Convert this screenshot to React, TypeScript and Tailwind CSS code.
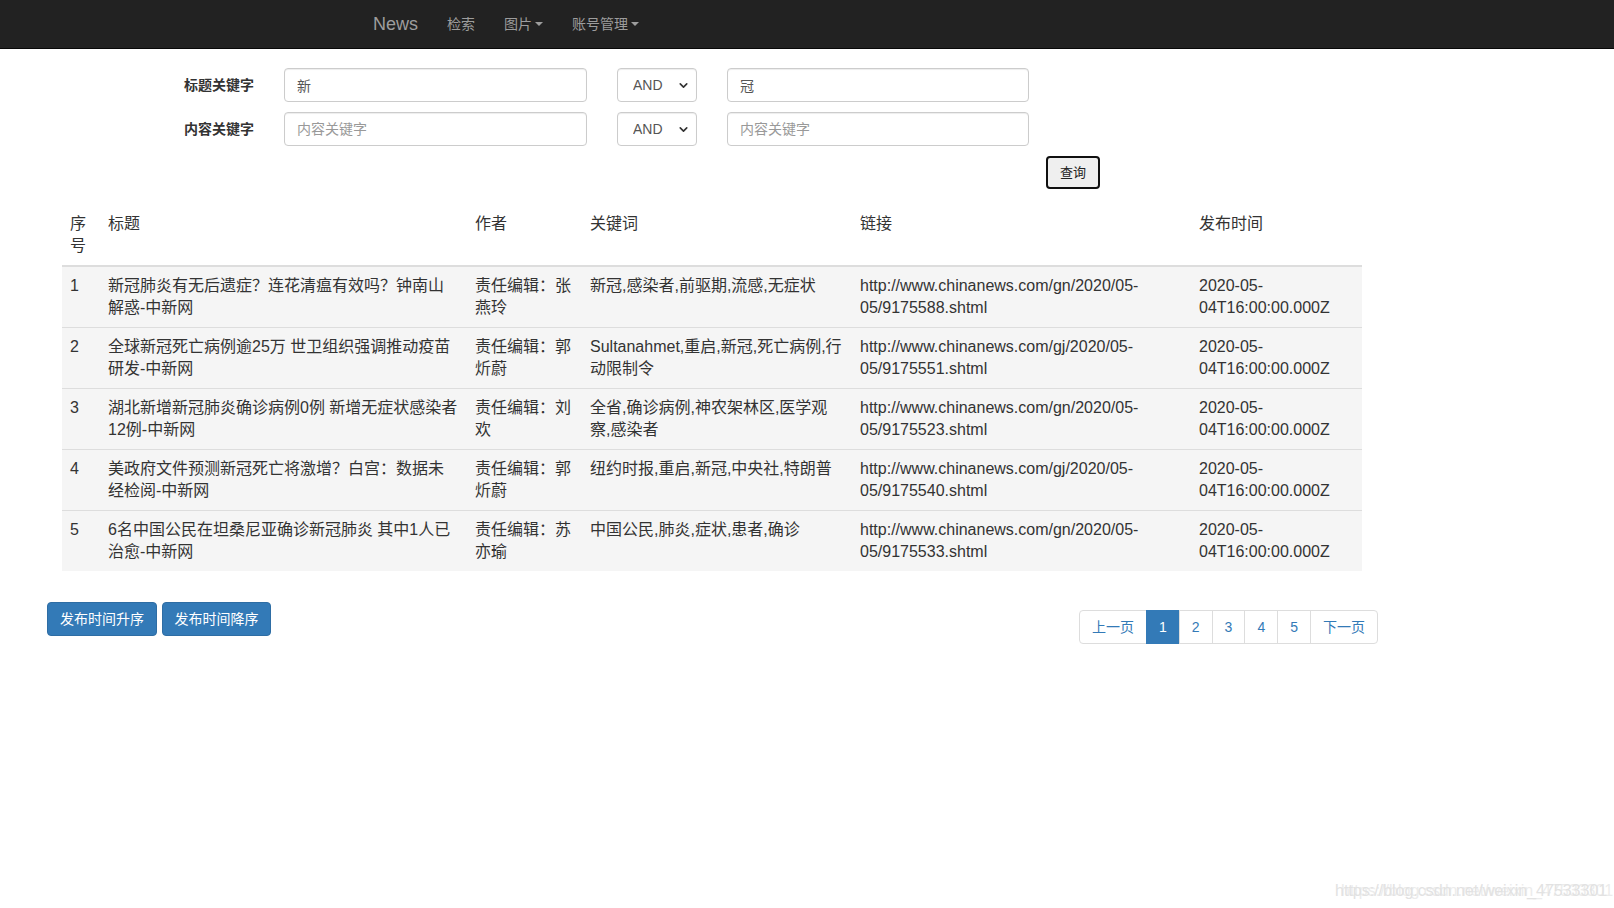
import { ChevronDown } from 'lucide-react';

const rows = [
  {
    id: 1,
    title: '新冠肺炎有无后遗症？连花清瘟有效吗？钟南山解惑-中新网',
    author: '责任编辑：张燕玲',
    keywords: '新冠,感染者,前驱期,流感,无症状',
    link: 'http://www.chinanews.com/gn/2020/05-05/9175588.shtml',
  },
  {
    id: 2,
    title: '全球新冠死亡病例逾25万 世卫组织强调推动疫苗研发-中新网',
    author: '责任编辑：郭炘蔚',
    keywords: 'Sultanahmet,重启,新冠,死亡病例,行动限制令',
    link: 'http://www.chinanews.com/gj/2020/05-05/9175551.shtml',
  },
  {
    id: 3,
    title: '湖北新增新冠肺炎确诊病例0例 新增无症状感染者12例-中新网',
    author: '责任编辑：刘欢',
    keywords: '全省,确诊病例,神农架林区,医学观察,感染者',
    link: 'http://www.chinanews.com/gn/2020/05-05/9175523.shtml',
  },
  {
    id: 4,
    title: '美政府文件预测新冠死亡将激增？白宫：数据未经检阅-中新网',
    author: '责任编辑：郭炘蔚',
    keywords: '纽约时报,重启,新冠,中央社,特朗普',
    link: 'http://www.chinanews.com/gj/2020/05-05/9175540.shtml',
  },
  {
    id: 5,
    title: '6名中国公民在坦桑尼亚确诊新冠肺炎 其中1人已治愈-中新网',
    author: '责任编辑：苏亦瑜',
    keywords: '中国公民,肺炎,症状,患者,确诊',
    link: 'http://www.chinanews.com/gn/2020/05-05/9175533.shtml',
  },
];

const font = "font-['Liberation_Sans','Noto_Sans_CJK_SC',sans-serif]";

function Caret() {
  return <span className="ml-[3px] inline-block h-0 w-0 border-x-[4px] border-t-[4px] border-x-transparent border-t-[#9d9d9d] align-middle" />;
}

function AndSelect() {
  return (
    <div className="relative ml-[30px] w-[80px]">
      <select className="h-[34px] w-full appearance-none rounded-[4px] border border-[#ccc] bg-white pl-[15px] text-[14px] text-[#555] shadow-[inset_0_1px_1px_rgba(0,0,0,0.075)]">
        <option>AND</option>
        <option>OR</option>
      </select>
      <ChevronDown className="pointer-events-none absolute right-[7px] top-[11px] h-[13px] w-[13px] text-[#333]" strokeWidth={3} />
    </div>
  );
}

function TextInput({ value, placeholder }: { value?: string; placeholder: string }) {
  return (
    <input
      defaultValue={value}
      placeholder={placeholder}
      className="h-[34px] w-full rounded-[4px] border border-[#ccc] bg-white px-[12px] text-[14px] text-[#555] shadow-[inset_0_1px_1px_rgba(0,0,0,0.075)] placeholder:text-[#999]"
    />
  );
}

export default function App() {
  return (
    <div className={`relative min-h-[908px] bg-white text-[#333] ${font}`}>
      {/* Navbar */}
      <nav className="flex h-[49px] items-center border-b border-[#080808] bg-[#222] pl-[373px] text-[#9d9d9d]">
        <span className="text-[18px]">News</span>
        <span className="ml-[29px] text-[14px]">检索</span>
        <span className="ml-[29px] flex items-center text-[14px]">图片<Caret /></span>
        <span className="ml-[29px] flex items-center text-[14px]">账号管理<Caret /></span>
      </nav>

      {/* Search form */}
      <div className="pl-[184px] pt-[19px]">
        <div className="flex items-center">
          <label className="w-[100px] text-[14px] font-bold">标题关键字</label>
          <div className="w-[303px]"><TextInput value="新" placeholder="标题关键字" /></div>
          <AndSelect />
          <div className="ml-[30px] w-[302px]"><TextInput value="冠" placeholder="标题关键字" /></div>
        </div>
        <div className="mt-[10px] flex items-center">
          <label className="w-[100px] text-[14px] font-bold">内容关键字</label>
          <div className="w-[303px]"><TextInput placeholder="内容关键字" /></div>
          <AndSelect />
          <div className="ml-[30px] w-[302px]"><TextInput placeholder="内容关键字" /></div>
        </div>
      </div>
      <div className="pl-[1046px] pt-[10px]">
        <button className="h-[33px] w-[54px] rounded-[4px] border-2 border-[#101010] bg-[#efefef] text-[13px] text-[#222]">查询</button>
      </div>

      {/* Results table */}
      <table className="ml-[62px] mt-[16px] w-[1300px] table-fixed border-collapse text-[16px] leading-[22px]">
        <colgroup>
          <col className="w-[38px]" />
          <col className="w-[367px]" />
          <col className="w-[115px]" />
          <col className="w-[270px]" />
          <col className="w-[339px]" />
          <col className="w-[171px]" />
        </colgroup>
        <thead>
          <tr className="border-b-2 border-[#ddd] text-left align-top">
            <th className="p-[8px] font-normal">序号</th>
            <th className="p-[8px] font-normal">标题</th>
            <th className="p-[8px] font-normal">作者</th>
            <th className="p-[8px] font-normal">关键词</th>
            <th className="p-[8px] font-normal">链接</th>
            <th className="p-[8px] font-normal">发布时间</th>
          </tr>
        </thead>
        <tbody>
          {rows.map((r) => (
            <tr key={r.id} className="border-t border-[#ddd] bg-[#f5f5f5] align-top">
              <td className="p-[8px]">{r.id}</td>
              <td className="p-[8px]">{r.title}</td>
              <td className="p-[8px]">{r.author}</td>
              <td className="p-[8px]">{r.keywords}</td>
              <td className="p-[8px]">{r.link}</td>
              <td className="p-[8px]">2020-05-04T16:00:00.000Z</td>
            </tr>
          ))}
        </tbody>
      </table>

      {/* Sort buttons + pagination */}
      <div className="mt-[31px] flex items-start">
        <div className="ml-[47px] flex gap-[5px]">
          <button className="h-[34px] w-[110px] rounded-[4px] border border-[#2e6da4] bg-[#337ab7] text-[14px] text-white">发布时间升序</button>
          <button className="h-[34px] w-[109px] rounded-[4px] border border-[#2e6da4] bg-[#337ab7] text-[14px] text-white">发布时间降序</button>
        </div>
        <ul className="ml-[808px] mt-[8px] flex text-[14px] leading-[20px] text-[#337ab7]">
          <li className="rounded-l-[4px] border border-[#ddd] px-[12px] py-[6px]">上一页</li>
          <li className="-ml-px border border-[#337ab7] bg-[#337ab7] px-[12px] py-[6px] text-white">1</li>
          <li className="-ml-px border border-[#ddd] px-[12px] py-[6px]">2</li>
          <li className="-ml-px border border-[#ddd] px-[12px] py-[6px]">3</li>
          <li className="-ml-px border border-[#ddd] px-[12px] py-[6px]">4</li>
          <li className="-ml-px border border-[#ddd] px-[12px] py-[6px]">5</li>
          <li className="-ml-px rounded-r-[4px] border border-[#ddd] px-[12px] py-[6px]">下一页</li>
        </ul>
      </div>

      {/* Watermark */}
      <span className="absolute left-[1335px] top-[879px] text-[16px] text-[#e2e2e2] [text-shadow:6px_0_0_#ececec]">https://blog.csdn.net/weixin_47533301</span>
    </div>
  );
}
